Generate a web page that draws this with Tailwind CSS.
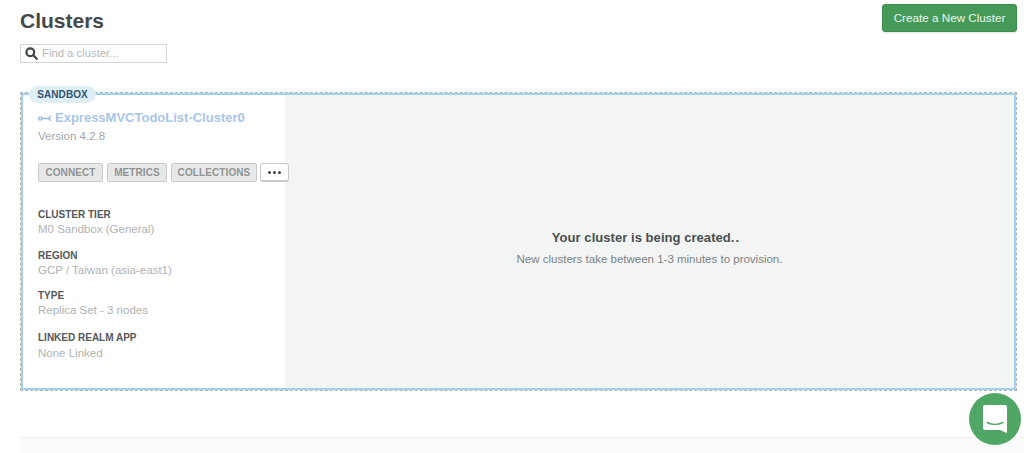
<!DOCTYPE html>
<html lang="en">
<head>
    <meta charset="UTF-8">
    <title>Clusters</title>
    <script src="https://cdn.jsdelivr.net/npm/@tailwindcss/browser@4"></script>
</head>
<body class="bg-white h-[453px] overflow-hidden relative font-['Liberation_Sans',Arial,sans-serif]">
    <div class="pl-5 pr-[7px]">
        <!-- Header -->
        <div class="flex justify-between items-start h-[92px]">
            <div>
                <h1 class="text-[21px] leading-[25px] font-bold text-[#43494b] pt-[8px]">Clusters</h1>
                <div class="mt-[11px] w-[147px] h-[19px] border border-[#d5d8d8] flex items-center pl-[4px] gap-[4px]">
                    <svg class="w-[13px] h-[13px]" viewBox="0 0 13 13" fill="none" stroke="#3f4547" stroke-width="2.2"><circle cx="5.3" cy="5.3" r="3.9"/><path d="M8.3 8.3 11.8 11.8" stroke-linecap="round"/></svg>
                    <span class="text-[11.3px] leading-none text-[#b5b8b8]">Find a cluster...</span>
                </div>
            </div>
            <button class="mt-1 w-[135px] h-[28px] rounded-[3px] bg-[#459a58] border border-[#3f8c50] text-white/90 text-[11.7px] shadow-sm">Create a New Cluster</button>
        </div>

        <!-- Cluster card -->
        <div class="relative h-[299px] border border-dashed border-[#b4b6b6]">
            <div class="absolute -top-[7px] left-2 h-[17px] w-[67px] rounded-full bg-[#deeef5] flex items-center justify-center text-[10px] font-bold tracking-[0.1px] text-[#2f5576]">SANDBOX</div>
            <div class="h-full border-2 border-[#a2d0ec] flex">
                <div class="w-[262px] pl-[15px] bg-white">
                    <div class="flex items-center gap-[4px] pt-[14px]">
                        <svg class="w-[13px] h-[7px]" viewBox="0 0 13 7" fill="none" stroke="#8fb8e4" stroke-width="1.3"><circle cx="2.2" cy="3.5" r="1.6"/><path d="M3.8 3.5H10.5M12.7 1.3 10.5 3.5l2.2 2.2"/></svg>
                        <span class="text-[13px] leading-[18px] font-bold text-[#a9c6e8]">ExpressMVCTodoList-Cluster0</span>
                    </div>
                    <p class="text-[11.5px] leading-[14px] mt-[2px] text-[#a3a6a6]">Version 4.2.8</p>
                    <div class="flex gap-[4px] mt-[20px] w-[260px]">
                        <span class="w-[65px] h-[19px] rounded-[2px] bg-[#e7e9e8] border border-[#c8cbcb] flex items-center justify-center text-[10px] font-bold tracking-[0.1px] text-[#8f9393]">CONNECT</span>
                        <span class="w-[60px] h-[19px] rounded-[2px] bg-[#e7e9e8] border border-[#c8cbcb] flex items-center justify-center text-[10px] font-bold tracking-[0.1px] text-[#8f9393]">METRICS</span>
                        <span class="w-[86px] h-[19px] rounded-[2px] bg-[#e7e9e8] border border-[#c8cbcb] flex items-center justify-center text-[10px] font-bold tracking-[0.1px] text-[#8f9393]">COLLECTIONS</span>
                        <span class="-ml-[1px] w-[29px] h-[19px] rounded-[3px] bg-white border border-[#c8cbcb] border-b-2 flex items-center justify-center gap-[2px] relative z-10">
                            <i class="w-[3px] h-[3px] rounded-full bg-[#3f4547]"></i><i class="w-[3px] h-[3px] rounded-full bg-[#3f4547]"></i><i class="w-[3px] h-[3px] rounded-full bg-[#3f4547]"></i>
                        </span>
                    </div>
                    <dl class="mt-[25px] text-[11.5px] leading-[15px]">
                        <dt class="text-[10px] font-bold text-[#53585a]">CLUSTER TIER</dt>
                        <dd class="text-[#b0b3b3]">M0 Sandbox (General)</dd>
                        <dt class="mt-[11px] text-[10px] font-bold text-[#53585a]">REGION</dt>
                        <dd class="text-[#b0b3b3]">GCP / Taiwan (asia-east1)</dd>
                        <dt class="mt-[10px] text-[10px] font-bold text-[#53585a]">TYPE</dt>
                        <dd class="text-[#b0b3b3]">Replica Set - 3 nodes</dd>
                        <dt class="mt-[12px] text-[10px] font-bold text-[#53585a]">LINKED REALM APP</dt>
                        <dd class="mt-[1px] text-[#b0b3b3]">None Linked</dd>
                    </dl>
                </div>
                <div class="flex-1 bg-[#f3f5f4] flex flex-col items-center pt-[134px]">
                    <p class="text-[13px] leading-[18px] font-bold text-[#494e50] tracking-[0.05px]">Your cluster is being created.<span class="ml-[1px]">.</span><span class="invisible inline-block w-[8px]">.</span></p>
                    <p class="text-[11.5px] leading-[15px] mt-[5px] text-[#7d8282]">New clusters take between 1-3 minutes to provision.</p>
                </div>
            </div>
        </div>
    </div>

    <!-- Footer -->
    <div class="mt-[46px] ml-5 h-[20px] border-t border-[#eeeeee] bg-[#fbfbfb]"></div>

    <!-- Chat launcher -->
    <div class="absolute left-[969px] top-[393px] w-[52px] h-[52px] rounded-full bg-[#50a664] flex items-center justify-center">
        <svg class="w-[24px] h-[28px]" viewBox="0 0 24 28"><path d="M2 0h20a2 2 0 0 1 2 2v26l-7-3H2a2 2 0 0 1-2-2V2a2 2 0 0 1 2-2z" fill="#fff"/><path d="M4 17.5c5 2.4 11 2.4 16 0" fill="none" stroke="#50a664" stroke-width="1.4" stroke-linecap="round"/></svg>
    </div>
</body>
</html>
